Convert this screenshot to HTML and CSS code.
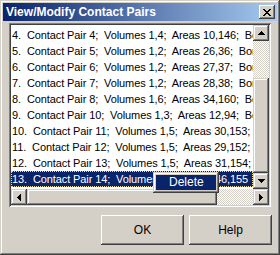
FILE: index.html
```html
<!DOCTYPE html>
<html>
<head>
<meta charset="utf-8">
<link rel="stylesheet" href="styles.css">
</head>
<body>
<div class="window">
  <div class="titlebar">
    <span class="title">View/Modify Contact Pairs</span>
    <span class="close"><svg width="8" height="7" viewBox="0 0 8 7"><path d="M0 0h2v1h1v1h2V1h1V0h2v1H7v1H6v1H5v1h1v1h1v1h1v1H6V6H5V5H3v1H2v1H0V6h1V5h1V4h1V3H2V2H1V1H0z" fill="#000"/></svg></span>
  </div>
  <div class="content">
    <div class="listbox">
      <div class="items">
        <div class="row">4.  Contact Pair 4;  Volumes 1,4;  Areas 10,146;  Border</div>
        <div class="row">5.  Contact Pair 5;  Volumes 1,2;  Areas 26,36;  Border</div>
        <div class="row">6.  Contact Pair 6;  Volumes 1,2;  Areas 27,37;  Border</div>
        <div class="row">7.  Contact Pair 7;  Volumes 1,2;  Areas 28,38;  Border</div>
        <div class="row">8.  Contact Pair 8;  Volumes 1,6;  Areas 34,160;  Border</div>
        <div class="row">9.  Contact Pair 10;  Volumes 1,3;  Areas 12,94;  Border</div>
        <div class="row">10.  Contact Pair 11;  Volumes 1,5;  Areas 30,153;  Border</div>
        <div class="row">11.  Contact Pair 12;  Volumes 1,5;  Areas 29,152;  Border</div>
        <div class="row">12.  Contact Pair 13;  Volumes 1,5;  Areas 31,154;  Border</div>
        <div class="row selected"><span class="focus">13.  Contact Pair 14;  Volumes 1,5;  Areas 46,155</span></div>
      </div>
      <div class="vscroll">
        <div class="sbtn"><svg width="7" height="4" viewBox="0 0 7 4"><path d="M3 0h1v1h1v1h1v1h1v1H0V3h1V2h1V1h1z" fill="#000"/></svg></div>
        <div class="vtrack"><div class="vthumb"></div></div>
        <div class="sbtn"><svg width="7" height="4" viewBox="0 0 7 4"><path d="M0 0h7v1H6v1H5v1H4v1H3V3H2V2H1V1H0z" fill="#000"/></svg></div>
      </div>
      <div class="hscroll">
        <div class="sbtn"><svg width="4" height="7" viewBox="0 0 4 7"><path d="M3 0h1v7H3V6H2V5H1V4H0V3h1V2h1V1h1z" fill="#000"/></svg></div>
        <div class="htrack"><div class="hthumb"></div></div>
        <div class="sbtn"><svg width="4" height="7" viewBox="0 0 4 7"><path d="M0 0h1v1h1v1h1v1h1v1H3v1H2v1H1v1H0z" fill="#000"/></svg></div>
      </div>
    </div>
  </div>
  <div class="buttons">
    <div class="btn">OK</div>
    <div class="btn">Help</div>
  </div>
  <div class="menu"><div class="menu-item">Delete</div></div>
</div>
</body>
</html>
```

FILE: styles.css
```css
html, body {
  margin: 0;
  padding: 0;
  background: #d4d0c8;
}
.window {
  position: relative;
  box-sizing: border-box;
  width: 280px;
  height: 255px;
  padding: 3px;
  background: #d4d0c8;
  box-shadow: inset -1px -1px #404040, inset 1px 1px #d4d0c8, inset -2px -2px #808080, inset 2px 2px #ffffff;
  display: flex;
  flex-direction: column;
  font-family: "Liberation Sans", Arial, sans-serif;
  overflow: hidden;
}
.titlebar {
  height: 18px;
  background: linear-gradient(to right, #0a246a, #a6caf0);
  display: flex;
  align-items: center;
  justify-content: space-between;
  padding: 0 2px 0 3px;
  color: #fff;
  font-weight: bold;
  font-size: 12px;
}
.close {
  width: 16px;
  height: 14px;
  box-sizing: border-box;
  background: #d4d0c8;
  box-shadow: inset -1px -1px #404040, inset 1px 1px #ffffff, inset -2px -2px #808080;
  display: flex;
  align-items: center;
  justify-content: center;
}
.content {
  padding: 2px 6px 0 6px;
}
.listbox {
  box-sizing: border-box;
  height: 184px;
  padding: 2px;
  background: #fff;
  box-shadow: inset 1px 1px #808080, inset -1px -1px #ffffff, inset 2px 2px #404040, inset -2px -2px #d4d0c8;
  display: grid;
  grid-template-columns: 1fr 16px;
  grid-template-rows: 1fr 16px;
}
.items {
  overflow: hidden;
  padding-top: 2px;
  font-size: 11px;
  letter-spacing: -0.1px;
}
.row {
  height: 16px;
  line-height: 16px;
  padding-left: 1px;
  white-space: pre;
  color: #000;
}
.row.selected {
  background: #0a246a;
  color: #fff;
  padding-left: 0;
}
.focus {
  display: block;
  height: 14px;
  line-height: 14px;
  border: 1px dotted #e8d8a0;
  overflow: hidden;
}
.vscroll {
  display: flex;
  flex-direction: column;
}
.hscroll {
  grid-column: 1 / 3;
  display: flex;
}
.sbtn {
  width: 16px;
  height: 16px;
  flex: none;
  box-sizing: border-box;
  background: #d4d0c8;
  box-shadow: inset -1px -1px #404040, inset 1px 1px #d4d0c8, inset -2px -2px #808080, inset 2px 2px #ffffff;
  display: flex;
  align-items: center;
  justify-content: center;
}
.vtrack, .htrack {
  flex: 1;
  background: repeating-conic-gradient(#ffffff 0 25%, #d4d0c8 0 50%) 0 0 / 2px 2px;
  display: flex;
}
.vtrack {
  flex-direction: column;
  justify-content: flex-end;
}
.vthumb {
  height: 95px;
  background: #d4d0c8;
  box-shadow: inset -1px -1px #404040, inset 1px 1px #d4d0c8, inset -2px -2px #808080, inset 2px 2px #ffffff;
}
.hthumb {
  width: 190px;
  background: #d4d0c8;
  box-shadow: inset -1px -1px #404040, inset 1px 1px #d4d0c8, inset -2px -2px #808080, inset 2px 2px #ffffff;
}
.buttons {
  display: flex;
  justify-content: flex-end;
  gap: 5px;
  padding: 8px 5px 0 0;
}
.btn {
  width: 83px;
  height: 30px;
  box-sizing: border-box;
  background: #d4d0c8;
  box-shadow: inset -1px -1px #404040, inset 1px 1px #ffffff, inset -2px -2px #808080;
  display: flex;
  align-items: center;
  justify-content: center;
  font-size: 12px;
  color: #000;
}
.menu {
  position: absolute;
  left: 153px;
  top: 172px;
  width: 66px;
  height: 21px;
  box-sizing: border-box;
  padding: 3px;
  background: #d4d0c8;
  box-shadow: inset -1px -1px #404040, inset 1px 1px #d4d0c8, inset -2px -2px #808080, inset 2px 2px #ffffff;
}
.menu-item {
  height: 15px;
  line-height: 15px;
  background: #0a246a;
  color: #fff;
  font-size: 12px;
  padding-left: 13px;
}
```
